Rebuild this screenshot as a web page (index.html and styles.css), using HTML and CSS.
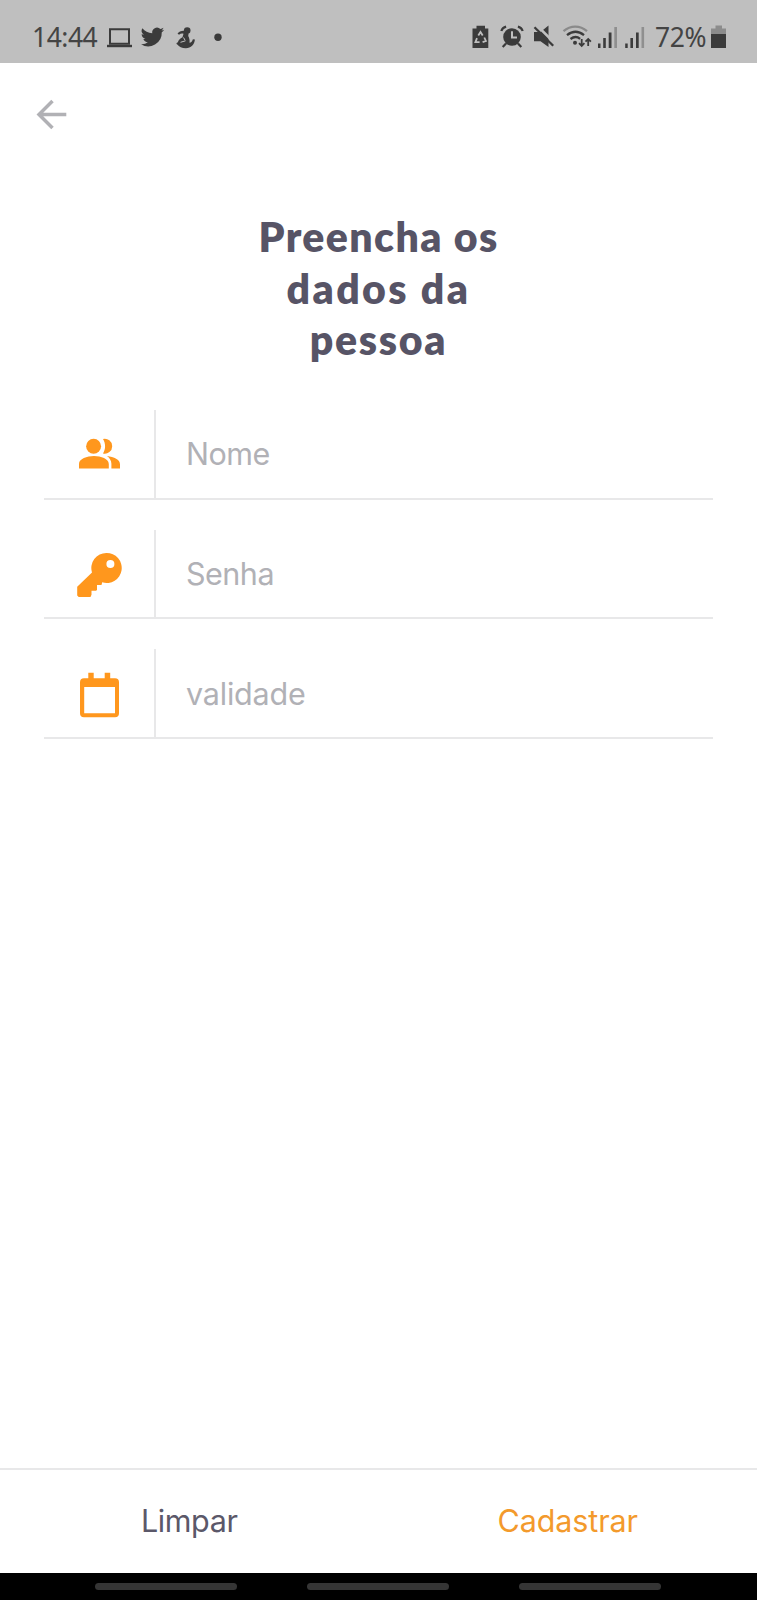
FILE: index.html
```html
<!DOCTYPE html>
<html lang="pt-BR">
<head>
<meta charset="utf-8">
<title>Cadastro</title>
<link rel="stylesheet" href="styles.css">
</head>
<body>
<div class="screen">
  <div class="status">
    <span class="time">14:44</span>
    <svg class="status-left" width="120" height="30" viewBox="104 22 120 30">
      <path d="M110 29.2h19v14.6h-19z" fill="none" stroke="#3b3b3b" stroke-width="2"/>
      <path d="M107 44.8h25v2.4h-25z"/>
      <path transform="translate(141 25.2) scale(.98)" d="M23.6 4.6c-.9.4-1.8.7-2.8.8 1-.6 1.8-1.6 2.1-2.7-.9.6-2 1-3.1 1.2A4.9 4.9 0 0 0 11.500 8.300C7.400 8.100 3.800 6.100 1.400 3.200A4.900 4.900 0 0 0 2.900 9.700c-.8 0-1.500-.2-2.200-.6v.1c0 2.400 1.700 4.300 3.900 4.800-.7.200-1.500.2-2.200.1.6 1.900 2.400 3.300 4.600 3.400A9.900 9.900 0 0 1 0 19.500 13.900 13.900 0 0 0 21.200 7.200c.9-.7 1.700-1.600 2.400-2.600z"/>
      <circle cx="187.200" cy="30.500" r="3.300"/>
      <path d="M186.500 31c-4-1-7.500.2-9 2.600l1.500 1.200c1.500-1.300 3-1.500 4.500-1l-1 3.500c-2.500 1.200-4.200 3-4.600 5-1.500.2-2 1.900-.6 2.300 1.800 2.500 4.600 3.600 8.600 3.600 5 0 8.600-3.400 9-8.600l-2-.4c-.5 2-1.700 3.300-3.400 3.600.5-3.200-.4-5-1.300-6.800.6-2 .3-3.500-.4-5z"/>
      <path d="M180.500 42.300l5-1.500M183.500 37.500l1.500 2.700" stroke="#bfbfbf" stroke-width="1" fill="none"/>
      <circle cx="218" cy="37.300" r="3.700"/>
    </svg>
    <svg class="status-right" width="176" height="30" viewBox="472 22 176 30">
      <path d="M476.500 25.700h8.500v2.800h3.300v19.400h-15.800V28.500h4z"/>
      <path d="M478.300 35.500l2.200-3.500 2.200 3.500M484.300 37.500l1.600 3.500-3.300 1.200M479.600 42.200h-4.200l1.600-4" fill="none" stroke="#bfbfbf" stroke-width="1.800"/>
      <circle cx="512" cy="37" r="8.800"/>
      <path d="M512 31.300v6.300h5" fill="none" stroke="#bfbfbf" stroke-width="2"/>
      <path d="M501.300 31c.8-2.300 2.300-3.700 4.800-4.400M522.700 31c-.8-2.300-2.300-3.700-4.800-4.400M506 43.500l-3.300 3.600M518 43.500l3.300 3.600" fill="none" stroke="#3b3b3b" stroke-width="2.200"/>
      <path d="M534 32h6.500l8-6.500V47l-8-5.800H534z"/>
      <path d="M537 25.500l18 18" stroke="#bfbfbf" stroke-width="2.500"/>
      <path d="M534.500 27.200l18.700 18.600" stroke="#3b3b3b" stroke-width="2.300"/>
      <path d="M563.500 31.200c7-6 16.500-6 23.500 0" fill="none" stroke="#8a8a8a" stroke-width="2.200"/>
      <path d="M567 35.200c5.500-4.500 11.500-4.500 17 0M570.500 39c3.300-2.500 6.700-2.500 9.600-.2" fill="none" stroke="#3b3b3b" stroke-width="2.300"/>
      <circle cx="575" cy="42.700" r="2"/>
      <path d="M581.700 39v7M579 43.200l2.700 2.700 2.700-2.700M588.200 46v-7M585.500 41.700l2.700-2.700 2.700 2.700" fill="none" stroke="#3b3b3b" stroke-width="1.800"/>
      <path d="M598 43.500h2.500V48H598zM603.200 38h2.600v10h-2.600zM608.700 32.500h2.800V48h-2.800zM625.200 43.500h2.500V48h-2.500zM630.400 38h2.600v10h-2.600zM636 32.500h2.700V48H636z"/>
      <path d="M614.300 27h2.700v21h-2.700zM641.500 27h2.600v21h-2.600z" fill="#8f8f8f"/>
    </svg>
    <span class="percent">72%</span>
    <svg class="battery" width="16" height="30" viewBox="711 22 16 30">
      <path d="M715.500 25.500h6.500v3h4v6h-15v-6h4.500z" fill="#8c8c8c"/>
      <path d="M711 34h15v14h-15z"/>
    </svg>
  </div>
  <div class="header">
    <svg width="32" height="32" viewBox="36 98 32 32"><path d="M66.300 114.500H39M52.500 101L39 114.500 52.500 128" fill="none" stroke="#b1b1b5" stroke-width="3.500"/></svg>
  </div>
  <h1 class="title"><span class="line1">Preencha os</span><br><span class="line2">dados da</span><br><span class="line3">pessoa</span></h1>
  <div class="form">
    <div class="field">
      <div class="icon"><svg width="50" height="50" viewBox="74 429 50 50"><circle cx="93.600" cy="446.200" r="7.500"/><path d="M103 438.900a7.500 7.500 0 1 1 0 14.600c2.800-4.600 2.800-10 0-14.600zM79 468.600v-4.700c0-5 8-7.900 15-7.900s14.800 2.900 14.800 7.900v4.700zM107 456c7 .8 13 3.500 13 8.200v4.400h-8.600v-4.800c0-3.200-1.800-5.800-4.400-7.800z"/></svg></div>
      <div class="input">Nome</div>
    </div>
    <div class="field">
      <div class="icon"><svg width="50" height="50" viewBox="74 549 50 50"><path fill-rule="evenodd" d="M106.500 553a15 15 0 1 1-4.300 29.300l-.7 2.700h-4.500v5l-1 .7h-4.500v4l-1 2.300H78.700l-1.500-1.500v-8.800L92 572.500A15 15 0 0 1 106.500 553zm3.900 6.900a4 4 0 1 0 0 8 4 4 0 1 0 0-8z"/></svg></div>
      <div class="input">Senha</div>
    </div>
    <div class="field">
      <div class="icon"><svg width="50" height="50" viewBox="74 668 50 50"><path fill-rule="evenodd" d="M88.300 672.700h5.400v5.500h11v-5.500h5.500v5.500h4.800a4 4 0 0 1 4 4v31a4 4 0 0 1-4 4H84a4 4 0 0 1-4-4v-31a4 4 0 0 1 4-4h4.300zM84.200 687v26.200H115V687z"/></svg></div>
      <div class="input date">validade</div>
    </div>
  </div>
  <div class="footer">
    <div class="action">Limpar</div>
    <div class="action primary">Cadastrar</div>
  </div>
  <div class="nav"><i></i><i></i><i></i></div>
</div>
</body>
</html>
```
FILE: styles.css
```css
body { margin: 0; background: #fff; }
.screen { width: 757px; height: 1600px; display: flex; flex-direction: column; font-family: Inter, sans-serif; overflow: hidden; }
.status { height: 63px; box-sizing: border-box; padding: 15px 30px 4px 32px; background: #bfbfbf; display: flex; align-items: center; color: #444; fill: #3b3b3b; font: 400 26.5px/44px "Noto Sans", sans-serif; }
.time { width: 72px; letter-spacing: -.5px; }
.status-right { margin-left: auto; margin-right: 7px; }
.percent { width: 56px; letter-spacing: -.4px; }
.status svg { flex: none; margin-top: -1px; }
.header { height: 67px; padding: 35px 36px 0; box-sizing: border-box; }
.header svg { display: block; }
.title { margin: 81px 0 0; height: 199px; text-align: center; font: 800 41px/51.7px Lato, sans-serif; color: #575466; }
.line1 { letter-spacing: 1.4px; }
.line2 { letter-spacing: 2.4px; }
.line3 { letter-spacing: 1.7px; }
.form { flex: 1; padding: 0 44px; }
.field { height: 89.700px; box-sizing: border-box; border-bottom: 2px solid #e8e8e9; display: flex; margin-bottom: 30px; }
.icon { width: 112px; box-sizing: border-box; padding-left: 30px; border-right: 2px solid #e8e8e9; display: flex; align-items: center; fill: #ff971d; }
.input { padding-left: 30px; line-height: 88px; font-size: 30.5px; font-weight: 400; letter-spacing: -.5px; color: #b1b1b6; }
.date { line-height: 89px; letter-spacing: -.2px; }
.footer { height: 105px; box-sizing: border-box; border-top: 2px solid #e8e8e9; display: flex; }
.action { flex: 1; text-align: center; font-size: 30.5px; font-weight: 400; letter-spacing: -.4px; line-height: 102px; color: #5b5869; }
.primary { color: #f39a2c; letter-spacing: -.1px; }
.nav { height: 27px; background: #000; display: flex; gap: 70px; padding: 10px 0 0 95px; box-sizing: border-box; }
.nav i { width: 142px; height: 7px; border-radius: 4px; background: #353535; }
```
